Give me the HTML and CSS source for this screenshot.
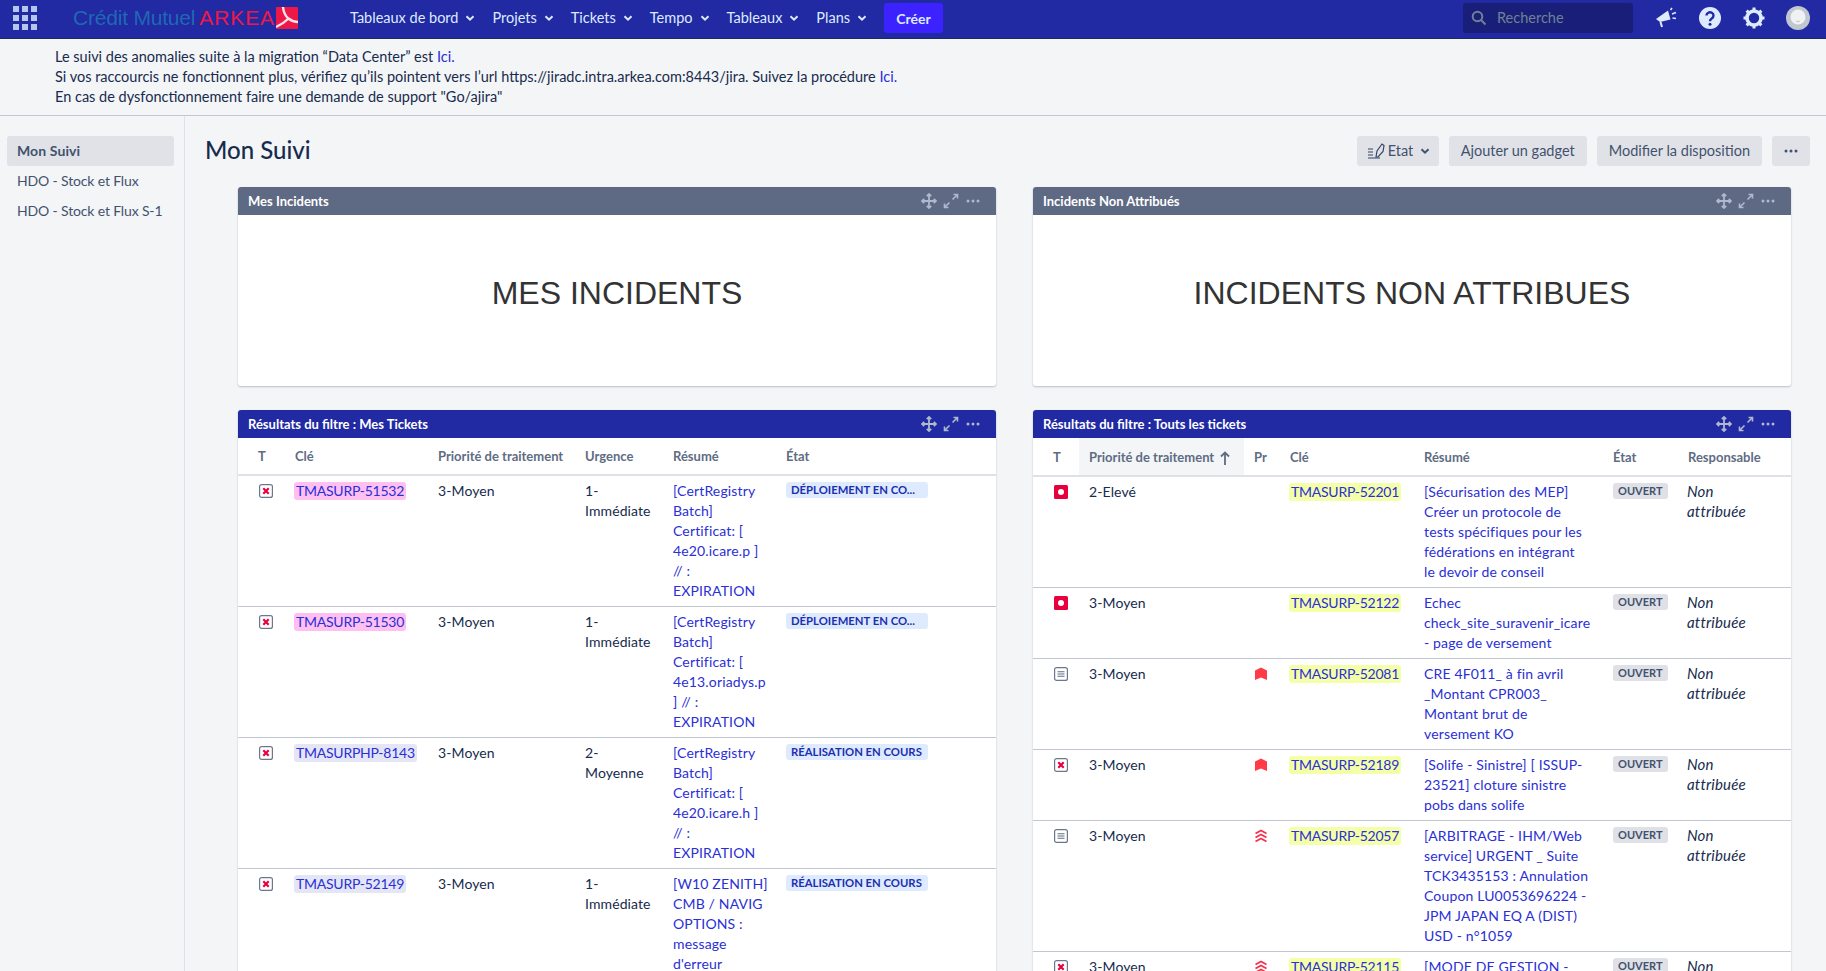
FILE: index.html
```html
<!DOCTYPE html>
<html lang="fr">
<head>
<meta charset="utf-8">
<title>Mon Suivi</title>
<link rel="stylesheet" href="styles.css">
</head>
<body>
<svg class="sprite" width="0" height="0" aria-hidden="true">
  <symbol id="chev" viewBox="0 0 10 10"><path d="M1.5 3.2 5 6.7l3.5-3.5" fill="none" stroke="currentColor" stroke-width="2"/></symbol>
  <symbol id="move" viewBox="0 0 16 16"><path d="M8 1v14M1 8h14M5.8 3.2 8 1l2.2 2.2M5.8 12.8 8 15l2.2-2.2M3.2 5.8 1 8l2.2 2.2M12.8 5.8 15 8l-2.2 2.2" fill="none" stroke="currentColor" stroke-width="1.8"/></symbol>
  <symbol id="expand" viewBox="0 0 16 16"><path d="M9.5 6.5 14 2M10.500 1.500H14.500V5.500M6.500 9.500 2 14M1.500 10.500V14.500H5.500" fill="none" stroke="currentColor" stroke-width="1.6"/></symbol>
  <symbol id="dots" viewBox="0 0 16 16"><circle cx="3" cy="8" r="1.500" fill="currentColor"/><circle cx="8" cy="8" r="1.500" fill="currentColor"/><circle cx="13" cy="8" r="1.500" fill="currentColor"/></symbol>
  <symbol id="bug" viewBox="0 0 14 14"><rect x=".6" y=".6" width="12.800" height="12.800" rx="2" fill="#fff" stroke="#6b778c" stroke-width="1.200"/><path d="M4.300 4.300l5.400 5.400M9.700 4.300l-5.400 5.400" stroke="#e8003c" stroke-width="2.200"/></symbol>
  <symbol id="incident" viewBox="0 0 14 14"><rect width="14" height="14" rx="1.500" fill="#e8003c"/><circle cx="7" cy="7" r="3" fill="#fff"/></symbol>
  <symbol id="doc" viewBox="0 0 14 14"><rect x=".6" y=".6" width="12.800" height="12.800" rx="2" fill="#fff" stroke="#6b778c" stroke-width="1.200"/><path d="M3.500 4.700h7M3.500 7h7M3.500 9.300h7" stroke="#5e6c84" stroke-width="1.100"/></symbol>
  <symbol id="highest" viewBox="0 0 14 14"><path d="M1 13V3.500L7 .5l6 3V13l-6-2.500z" fill="#ff3b47"/></symbol>
  <symbol id="high" viewBox="0 0 14 14"><path d="M1.500 4.500 7 1.500l5.500 3M1.500 8.500 7 5.500l5.500 3M1.500 12.500 7 9.500l5.500 3" fill="none" stroke="#f5304a" stroke-width="1.700"/></symbol>
</svg>

<header class="topbar">
  <svg class="apps" width="24" height="24" viewBox="0 0 24 24"><path d="M0 0h6v6H0zM9 0h6v6H9zM18 0h6v6h-6zM0 9h6v6H0zM9 9h6v6H9zM18 9h6v6h-6zM0 18h6v6H0zM9 18h6v6H9zM18 18h6v6h-6z" fill="#b3c6ee"/></svg>
  <div class="logo">
    <span class="logo-cm">Crédit Mutuel</span><span class="logo-ark">ARKEA</span>
    <svg class="logo-mark" width="22" height="22" viewBox="0 0 22 22"><rect width="22" height="22" rx="1" fill="#ee1848"/><path d="M7 0c.5 5 2 9 5.500 11.500M12.500 11.500C9 15 5 18 0 20M12.500 11.500c3 2.500 6 3.500 9.500 3.500" fill="none" stroke="#fbe3e8" stroke-width="2.400"/></svg>
  </div>
  <nav class="nav">
    <a class="nav-item">Tableaux de bord <svg class="ic10"><use href="#chev"/></svg></a>
    <a class="nav-item">Projets <svg class="ic10"><use href="#chev"/></svg></a>
    <a class="nav-item">Tickets <svg class="ic10"><use href="#chev"/></svg></a>
    <a class="nav-item">Tempo <svg class="ic10"><use href="#chev"/></svg></a>
    <a class="nav-item">Tableaux <svg class="ic10"><use href="#chev"/></svg></a>
    <a class="nav-item">Plans <svg class="ic10"><use href="#chev"/></svg></a>
    <button class="create">Créer</button>
  </nav>
  <div class="top-right">
    <div class="search">
      <svg width="16" height="16" viewBox="0 0 16 16"><circle cx="6.500" cy="6.500" r="4.800" fill="none" stroke="#6f8196" stroke-width="2"/><path d="M10 10l4.500 4.500" stroke="#6f8196" stroke-width="2"/></svg>
      <span>Recherche</span>
    </div>
    <svg class="tool" width="22" height="22" viewBox="0 0 22 22"><path d="M1 12 13 3.500l2.500 9L5 15z" fill="#deebff"/><path d="M5.500 15l1.500 5" stroke="#deebff" stroke-width="2"/><path d="M15.500 3l1.500-2M17 7l4-1.500M17.500 11l3.500.500" stroke="#deebff" stroke-width="1.600"/></svg>
    <svg class="tool" width="22" height="22" viewBox="0 0 22 22"><circle cx="11" cy="11" r="11" fill="#deebff"/><path d="M7.500 8.500a3.500 3.300 0 1 1 5.300 2.900c-1.200.8-1.800 1.300-1.800 2.800" fill="none" stroke="#2129a3" stroke-width="2.400"/><circle cx="11" cy="17.300" r="1.500" fill="#2129a3"/></svg>
    <svg class="tool" width="22" height="22" viewBox="0 0 22 22"><circle cx="11" cy="11" r="7" fill="none" stroke="#deebff" stroke-width="3.600"/><path d="M11 .5v3.500M11 18v3.500M.5 11H4M18 11h3.500M3.600 3.600l2.500 2.500M15.900 15.900l2.500 2.500M3.600 18.400l2.500-2.500M15.900 6.100l2.500-2.500" stroke="#deebff" stroke-width="3"/></svg>
    <svg class="avatar" width="24" height="24" viewBox="0 0 24 24"><circle cx="12" cy="12" r="12" fill="#c1c7d0"/><circle cx="12" cy="11" r="7.500" fill="#f0f1f3"/><path d="M10 15q2 1.500 4 0" fill="none" stroke="#c1c7d0"/></svg>
  </div>
</header>

<section class="banner">
  <p>Le suivi des anomalies suite à la migration “Data Center” est <a>Ici.</a></p>
  <p>Si vos raccourcis ne fonctionnent plus, vérifiez qu’ils pointent vers l’url https://jiradc.intra.arkea.com:8443/jira. Suivez la procédure <a>Ici.</a></p>
  <p>En cas de dysfonctionnement faire une demande de support "Go/ajira"</p>
</section>

<div class="layout">
  <aside class="sidebar">
    <a class="side-item active">Mon Suivi</a>
    <a class="side-item">HDO - Stock et Flux</a>
    <a class="side-item">HDO - Stock et Flux S-1</a>
  </aside>
  <main class="content">
    <div class="page-head">
      <h1>Mon Suivi</h1>
      <div class="actions">
        <button class="btn btn-state">
          <svg width="18" height="18" viewBox="0 0 18 18"><path d="M1 7h5M1 10h5M1 13h5M1 16h12" stroke="#344563" stroke-width="1.200"/><path d="M9 15l1-6 5-7 2 1.500-1 6-5 5.500z" fill="none" stroke="#344563" stroke-width="1.200"/></svg>
          Etat <svg class="ic10 chev-gap"><use href="#chev"/></svg>
        </button>
        <button class="btn">Ajouter un gadget</button>
        <button class="btn">Modifier la disposition</button>
        <button class="btn btn-more"><svg class="ic16"><use href="#dots"/></svg></button>
      </div>
    </div>

    <div class="gadgets">
      <div class="col">
        <section class="gadget">
          <div class="g-head grey"><span>Mes Incidents</span><div class="g-tools"><svg class="ic16"><use href="#move"/></svg><svg class="ic16"><use href="#expand"/></svg><svg class="ic16"><use href="#dots"/></svg></div></div>
          <div class="big">MES INCIDENTS</div>
        </section>
        <section class="gadget">
          <div class="g-head blue"><span>Résultats du filtre : Mes Tickets</span><div class="g-tools"><svg class="ic16"><use href="#move"/></svg><svg class="ic16"><use href="#expand"/></svg><svg class="ic16"><use href="#dots"/></svg></div></div>
          <table class="issues">
            <colgroup><col class="l1"><col class="l2"><col class="l3"><col class="l4"><col class="l5"><col class="l6"></colgroup>
            <thead><tr><th class="t">T</th><th>Clé</th><th>Priorité de traitement</th><th>Urgence</th><th>Résumé</th><th>État</th></tr></thead>
            <tbody>
              <tr><td class="t"><svg class="ic14"><use href="#bug"/></svg></td><td><a class="key pink">TMASURP-51532</a></td><td>3-Moyen</td><td>1-<br>Immédiate</td><td class="sum"><a>[CertRegistry<br>Batch]<br>Certificat: [<br>4e20.icare.p ]<br>// :<br>EXPIRATION</a></td><td><span class="loz blue-loz">DÉPLOIEMENT EN CO...</span></td></tr>
              <tr><td class="t"><svg class="ic14"><use href="#bug"/></svg></td><td><a class="key pink">TMASURP-51530</a></td><td>3-Moyen</td><td>1-<br>Immédiate</td><td class="sum"><a>[CertRegistry<br>Batch]<br>Certificat: [<br>4e13.oriadys.p<br>] // :<br>EXPIRATION</a></td><td><span class="loz blue-loz">DÉPLOIEMENT EN CO...</span></td></tr>
              <tr><td class="t"><svg class="ic14"><use href="#bug"/></svg></td><td><a class="key lav">TMASURPHP-8143</a></td><td>3-Moyen</td><td>2-<br>Moyenne</td><td class="sum"><a>[CertRegistry<br>Batch]<br>Certificat: [<br>4e20.icare.h ]<br>// :<br>EXPIRATION</a></td><td><span class="loz blue-loz">RÉALISATION EN COURS</span></td></tr>
              <tr><td class="t"><svg class="ic14"><use href="#bug"/></svg></td><td><a class="key lav">TMASURP-52149</a></td><td>3-Moyen</td><td>1-<br>Immédiate</td><td class="sum"><a>[W10 ZENITH]<br>CMB / NAVIG<br>OPTIONS :<br>message<br>d'erreur</a></td><td><span class="loz blue-loz">RÉALISATION EN COURS</span></td></tr>
            </tbody>
          </table>
        </section>
      </div>
      <div class="col">
        <section class="gadget">
          <div class="g-head grey"><span>Incidents Non Attribués</span><div class="g-tools"><svg class="ic16"><use href="#move"/></svg><svg class="ic16"><use href="#expand"/></svg><svg class="ic16"><use href="#dots"/></svg></div></div>
          <div class="big">INCIDENTS NON ATTRIBUES</div>
        </section>
        <section class="gadget">
          <div class="g-head blue"><span>Résultats du filtre : Touts les tickets</span><div class="g-tools"><svg class="ic16"><use href="#move"/></svg><svg class="ic16"><use href="#expand"/></svg><svg class="ic16"><use href="#dots"/></svg></div></div>
          <table class="issues issues-sorted">
            <colgroup><col class="r1"><col class="r2"><col class="r3"><col class="r4"><col class="r5"><col class="r6"><col class="r7"></colgroup>
            <thead><tr><th class="t">T</th><th class="sorted">Priorité de traitement <svg class="arrow" width="12" height="14" viewBox="0 0 12 14"><path d="M6 14V2M2 5.500 6 1.500l4 4" fill="none" stroke="#5e6c84" stroke-width="1.800"/></svg></th><th>Pr</th><th>Clé</th><th>Résumé</th><th>État</th><th>Responsable</th></tr></thead>
            <tbody>
              <tr><td class="t"><svg class="ic14"><use href="#incident"/></svg></td><td>2-Elevé</td><td></td><td><a class="key yellow">TMASURP-52201</a></td><td class="sum"><a>[Sécurisation des MEP]<br>Créer un protocole de<br>tests spécifiques pour les<br>fédérations en intégrant<br>le devoir de conseil</a></td><td><span class="loz grey-loz">OUVERT</span></td><td class="resp">Non<br>attribuée</td></tr>
              <tr><td class="t"><svg class="ic14"><use href="#incident"/></svg></td><td>3-Moyen</td><td></td><td><a class="key yellow">TMASURP-52122</a></td><td class="sum"><a>Echec<br>check_site_suravenir_icare<br>- page de versement</a></td><td><span class="loz grey-loz">OUVERT</span></td><td class="resp">Non<br>attribuée</td></tr>
              <tr><td class="t"><svg class="ic14"><use href="#doc"/></svg></td><td>3-Moyen</td><td class="pr"><svg class="ic14"><use href="#highest"/></svg></td><td><a class="key yellow">TMASURP-52081</a></td><td class="sum"><a>CRE 4F011_ à fin avril<br>_Montant CPR003_<br>Montant brut de<br>versement KO</a></td><td><span class="loz grey-loz">OUVERT</span></td><td class="resp">Non<br>attribuée</td></tr>
              <tr><td class="t"><svg class="ic14"><use href="#bug"/></svg></td><td>3-Moyen</td><td class="pr"><svg class="ic14"><use href="#highest"/></svg></td><td><a class="key yellow">TMASURP-52189</a></td><td class="sum"><a>[Solife - Sinistre] [ ISSUP-<br>23521] cloture sinistre<br>pobs dans solife</a></td><td><span class="loz grey-loz">OUVERT</span></td><td class="resp">Non<br>attribuée</td></tr>
              <tr><td class="t"><svg class="ic14"><use href="#doc"/></svg></td><td>3-Moyen</td><td class="pr"><svg class="ic14"><use href="#high"/></svg></td><td><a class="key yellow">TMASURP-52057</a></td><td class="sum"><a>[ARBITRAGE - IHM/Web<br>service] URGENT _ Suite<br>TCK3435153 : Annulation<br>Coupon LU0053696224 -<br>JPM JAPAN EQ A (DIST)<br>USD - n°1059</a></td><td><span class="loz grey-loz">OUVERT</span></td><td class="resp">Non<br>attribuée</td></tr>
              <tr><td class="t"><svg class="ic14"><use href="#bug"/></svg></td><td>3-Moyen</td><td class="pr"><svg class="ic14"><use href="#high"/></svg></td><td><a class="key yellow">TMASURP-52115</a></td><td class="sum"><a>[MODE DE GESTION -</a></td><td><span class="loz grey-loz">OUVERT</span></td><td class="resp">Non<br>attribuée</td></tr>
            </tbody>
          </table>
        </section>
      </div>
    </div>
  </main>
</div>
</body>
</html>
```

FILE: styles.css
```css
* { box-sizing: border-box; }
html, body { height: 100%; }
body {
  margin: 0;
  height: 971px;
  overflow: hidden;
  background: #f4f5f7;
  color: #172b4d;
  font-family: "Lato", "Noto Sans", sans-serif;
  font-size: 14px;
  line-height: 20px;
}
.sprite { position: absolute; }
.ic10 { width: 10px; height: 10px; }
.ic14 { width: 14px; height: 14px; display: block; }
.ic16 { width: 16px; height: 16px; }

.topbar {
  display: flex;
  align-items: center;
  height: 39px;
  background: #2129a3;
  border-bottom: 1px solid #1f2a5c;
  padding: 0 0 2px 13px;
}
.apps { flex: none; }
.logo {
  display: flex;
  align-items: center;
  margin-left: 36px;
  width: 277px;
  font-family: "Liberation Sans", sans-serif;
  font-size: 21px;
  line-height: 22px;
}
.logo-cm { color: #1f68b4; letter-spacing: -.2px; }
.logo-ark { color: #ee1848; margin-left: 4px; letter-spacing: .9px; }
.logo-mark { margin-left: 1px; flex: none; }
.nav { display: flex; align-items: center; }
.nav-item {
  display: flex;
  align-items: center;
  gap: 7px;
  color: #deebff;
  margin-right: 17px;
  white-space: nowrap;
  font-size: 14.500px;
}
.create {
  height: 30px;
  width: 59px;
  border: 0;
  border-radius: 3px;
  background: #3b22ff;
  color: #deebff;
  font: 700 14px "Lato", sans-serif;
}
.top-right {
  margin-left: auto;
  display: flex;
  align-items: center;
  gap: 22px;
  padding-right: 16px;
}
.search {
  display: flex;
  align-items: center;
  gap: 10px;
  width: 170px;
  height: 30px;
  padding-left: 8px;
  background: #191f79;
  border-radius: 3px;
  color: #6f8196;
  font-size: 14.500px;
}
.avatar { margin-left: -1px; }

.banner {
  height: 77px;
  padding: 8px 55px 0;
  border-bottom: 1px solid #c1c7d0;
  font-size: 14.500px;
}
.banner p { margin: 0; height: 20px; }
.banner a { color: #2a2fd6; }

.layout { display: flex; height: 856px; }
.sidebar {
  flex: none;
  width: 185px;
  border-right: 1px solid #dfe1e6;
  padding: 20px 10px 0 7px;
}
.side-item {
  display: block;
  height: 30px;
  line-height: 30px;
  padding-left: 10px;
  color: #42526e;
  border-radius: 3px;
  letter-spacing: -.15px;
}
.active { background: #e1e2e8; font-weight: 700; letter-spacing: .1px; }

.content { flex: 1; min-width: 0; }
.page-head {
  display: flex;
  justify-content: space-between;
  align-items: flex-start;
  padding: 20px 16px 0 20px;
  height: 71px;
}
h1 {
  margin: 0;
  font-size: 24px;
  line-height: 28px;
  font-weight: 500;
  color: #172b4d;
}
.actions { display: flex; gap: 10px; }
.btn {
  height: 30px;
  padding: 0 12px 1px;
  border: 0;
  border-radius: 3px;
  background: #e1e2e8;
  color: #42526e;
  font: 14.500px "Lato", sans-serif;
  display: flex;
  align-items: center;
}
.btn-state { gap: 3px; width: 82px; padding: 0 8px 1px 10px; }
.chev-gap { margin-left: 4px; flex: none; }
.btn-more { width: 38px; justify-content: center; padding: 0; }

.gadgets {
  display: grid;
  grid-template-columns: 758px 758px;
  gap: 37px;
  padding-left: 53px;
}
.col { display: flex; flex-direction: column; gap: 24px; }
.gadget {
  background: #fff;
  border-radius: 3px;
  box-shadow: 0 1px 2px rgba(9, 30, 66, .25);
}
.g-head {
  display: flex;
  align-items: center;
  justify-content: space-between;
  height: 28px;
  padding: 0 15px 0 10px;
  border-radius: 3px 3px 0 0;
  color: #fff;
  font-size: 13px;
  font-weight: 700;
}
.grey { background: #5e6984; }
.blue { background: #2129a3; }
.g-tools { display: flex; gap: 6px; color: #aeb8cf; }
.big {
  height: 171px;
  display: flex;
  align-items: center;
  justify-content: center;
  font-family: "Liberation Sans", sans-serif;
  font-size: 32px;
  color: #333;
  padding-bottom: 16px;
}

.issues {
  width: 758px;
  table-layout: fixed;
  border-collapse: collapse;
}
.l1 { width: 47px; } .l2 { width: 143px; } .l3 { width: 147px; } .l4 { width: 88px; } .l5 { width: 113px; } .l6 { width: 220px; }
.r1 { width: 46px; } .r2 { width: 165px; } .r3 { width: 36px; } .r4 { width: 134px; } .r5 { width: 189px; } .r6 { width: 75px; } .r7 { width: 113px; }
th {
  height: 37px;
  padding: 0 10px;
  text-align: left;
  font-size: 13px;
  font-weight: 700;
  color: #5e6c84;
  border-bottom: 2px solid #dfe1e6;
  white-space: nowrap;
}
.issues-sorted th { height: 38px; }
th.t, td.t { padding-left: 21px; padding-right: 0; }
th.t { padding-left: 20px; }
.sorted { background: #f4f5f7; }
.arrow { vertical-align: -3px; margin-left: 2px; }
td {
  vertical-align: top;
  padding: 5px 10px 5px;
  border-bottom: 1px solid #c1c7d0;
  white-space: nowrap;
  color: #172b4d;
  letter-spacing: .1px;
}
td.t svg { margin-top: 3px; }
td.pr svg { margin-top: 3px; }
.sum a { color: #2a2fd6; letter-spacing: .15px; }
.key {
  display: inline-block;
  padding: 0 2px;
  border-radius: 3px;
  color: #2a2fd6;
  margin-left: -1px;
  line-height: 18px;
  letter-spacing: -.25px;
}
.pink { background: #ffbff0; }
.lav { background: #e4e6f5; }
.yellow { background: #f4ffa8; }
.loz {
  display: inline-block;
  vertical-align: top;
  margin-top: 1px;
  padding: 0 5px;
  height: 16px;
  line-height: 16px;
  border-radius: 3px;
  font-size: 11px;
  font-weight: 700;
  letter-spacing: 0;
}
.blue-loz { background: #deebff; color: #1c2fb0; width: 142px; font-size: 11.300px; }
.grey-loz { background: #dfe1e6; color: #42526e; }
.resp { font-style: italic; font-size: 15px; letter-spacing: .2px; padding: 4px 9px 5px; }
```
